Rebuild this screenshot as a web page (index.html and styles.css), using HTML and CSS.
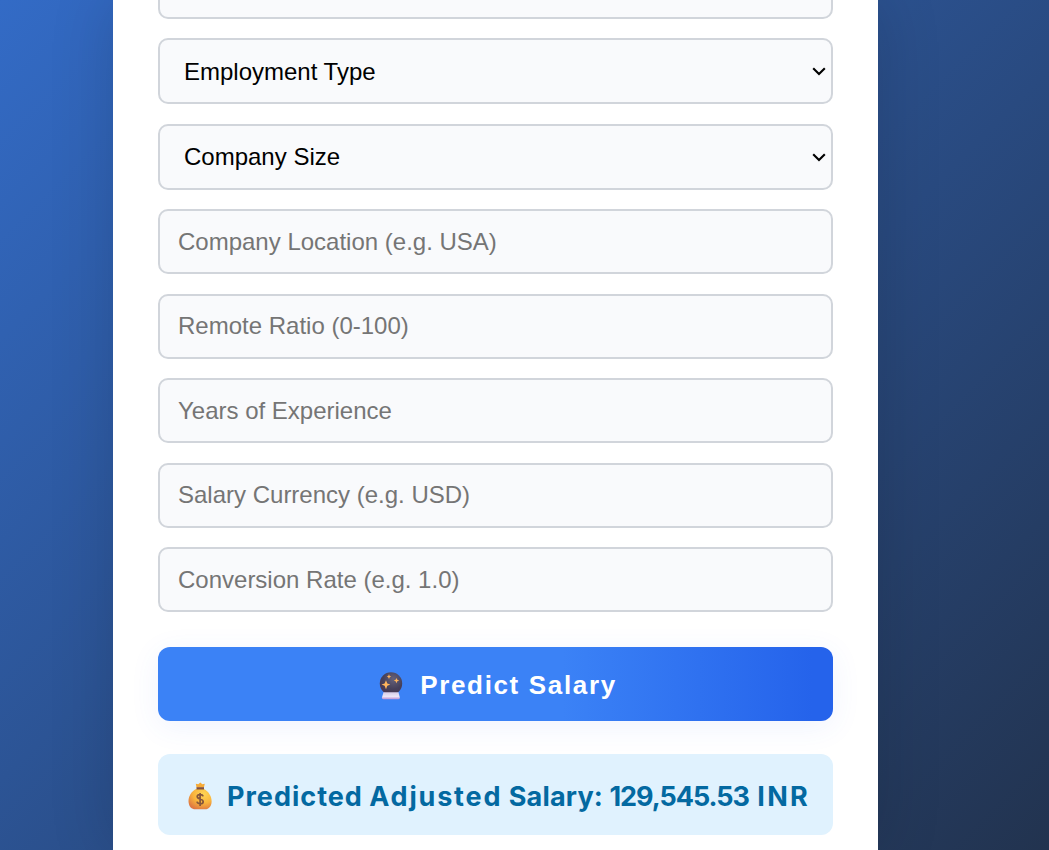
FILE: index.html
```html
<!DOCTYPE html>
<html lang="en">
<head>
<meta charset="utf-8">
<title>Salary Prediction</title>
<link rel="stylesheet" href="styles.css">
</head>
<body>
<main class="card">
  <form class="form">
    <input class="field" type="text" aria-label="Job details">
    <div class="select-wrap">
      <select class="field select" aria-label="Employment Type"><option>Employment Type</option></select>
      <svg class="chevron" viewBox="0 0 14 9" aria-hidden="true"><path d="M1.200 1.200L7 7L12.800 1.200"/></svg>
    </div>
    <div class="select-wrap">
      <select class="field select" aria-label="Company Size"><option>Company Size</option></select>
      <svg class="chevron" viewBox="0 0 14 9" aria-hidden="true"><path d="M1.200 1.200L7 7L12.800 1.200"/></svg>
    </div>
    <input class="field" type="text" placeholder="Company Location (e.g. USA)">
    <input class="field" type="text" placeholder="Remote Ratio (0-100)">
    <input class="field" type="text" placeholder="Years of Experience">
    <input class="field" type="text" placeholder="Salary Currency (e.g. USD)">
    <input class="field" type="text" placeholder="Conversion Rate (e.g. 1.0)">
    <button class="submit" type="button">
      <svg class="ball" viewBox="0 0 24 28" aria-hidden="true">
        <defs>
          <radialGradient id="glass" cx=".6" cy=".3" r=".75"><stop offset="0" stop-color="#65617a"/><stop offset=".6" stop-color="#45405a"/><stop offset="1" stop-color="#4a344f"/></radialGradient>
          <linearGradient id="base" x2="0" y2="1"><stop offset="0" stop-color="#d5cce8"/><stop offset=".6" stop-color="#eee6f7"/><stop offset="1" stop-color="#bd91d5"/></linearGradient>
        </defs>
        <circle cx="12" cy="11.5" r="11.2" fill="url(#glass)"/>
        <path d="M4.500 20.300H19.500L20.900 25.800Q20.900 27.200 19.500 27.200H4.300Q2.800 27.200 2.900 25.800Z" fill="url(#base)"/>
        <path d="M7 8.200L8.300 11.500L11.300 12.500L8.300 13.800L7 17.300L5.600 13.800L2.500 12.500L5.600 11.500ZM10 2.300L10.700 4L12.300 4.600L10.700 5.200L10 7.100L9.200 5.200L7.700 4.600L9.200 4ZM17.500 5.900L18.300 7.700L20.200 8.400L18.300 9.200L17.500 11.200L16.600 9.200L14.800 8.400L16.600 7.700Z" fill="#ffb45c"/>
      </svg>
      <span>Predict Salary</span>
    </button>
  </form>
  <div class="result">
    <svg class="bag" viewBox="0 0 24 28" aria-hidden="true">
      <defs><radialGradient id="gold" cx=".65" cy=".25" r=".8"><stop offset="0" stop-color="#ffd655"/><stop offset=".55" stop-color="#f9b53c"/><stop offset="1" stop-color="#df7842"/></radialGradient></defs>
      <path d="M8 7C3.500 9.500 .5 14 .5 19C.5 25 4 27.300 7 27.300H17C21 27.300 23.600 24 23.600 19.500C23.600 14 20.500 9.500 16 7Z" fill="url(#gold)"/>
      <path d="M8.500 5.500L7.800 1.800L10.300 2.300L12.300 .5L14.300 2.300L16.800 1.800L15.900 5.500Z" fill="#f6ab37"/>
      <path d="M8.500 5.200H16V7.500H8.500Z" fill="#80503f"/>
      <path d="M15 14.300C14.500 11.900 9.200 11.900 9.200 14.600C9.200 17.700 15.200 16.400 15.200 19.700C15.200 22.400 9.500 22.400 9 19.700M12.100 11V24" fill="none" stroke="#85563b" stroke-width="1.700"/>
    </svg>
    <span class="result-text"><span class="label-a">Predicted</span> <span class="label-b">Adjusted</span> <span class="label-c">Salary:</span> <span class="amount">129,545.53</span> <span class="currency">INR</span></span>
  </div>
</main>
</body>
</html>
```
FILE: styles.css
```css
* { box-sizing: border-box; }
body {
  margin: 0;
  height: 850px;
  overflow: hidden;
  background: linear-gradient(135deg, #336bc6, #22334f);
  font-family: "Liberation Sans", Arial, sans-serif;
}
.card {
  display: flow-root;
  width: 765px;
  height: 850px;
  margin-left: 113px;
  padding: 0 45px;
  background: #fff;
  box-shadow: 0 0 60px rgba(0, 0, 0, .15);
}
.form { display: flex; flex-direction: column; gap: 19.5px; margin-top: -46.3px; }
.field {
  display: block;
  flex: none;
  width: 100%;
  height: 65px;
  margin: 0;
  padding: 0 18px;
  border: 2px solid #d1d5db;
  border-radius: 10px;
  background: #f9fafc;
  color: #000;
  font: 24px "Liberation Sans", Arial, sans-serif;
}
.field::placeholder { color: #757575; }
.select-wrap { position: relative; }
.select { height: 66px; padding: 0 0 0 24px; appearance: none; }
.chevron {
  position: absolute;
  right: 7px;
  top: 29px;
  width: 14px;
  height: 9px;
  fill: none;
  stroke: #000;
  stroke-width: 2.1;
  pointer-events: none;
}
.submit {
  display: flex;
  align-items: center;
  justify-content: center;
  gap: 17px;
  height: 74px;
  margin: 15.3px 0 0;
  padding: 3px 0 0 5px;
  border: 0;
  border-radius: 12px;
  background: linear-gradient(to right, #3b82f6 0%, #3b82f6 60%, #2563eb 97%);
  box-shadow: 0 6px 30px rgba(59, 100, 246, .08);
  color: #fff;
  font: bold 26px "Liberation Sans", Arial, sans-serif;
  letter-spacing: 1.65px;
}
.ball, .bag { width: 24px; height: 28px; flex: none; }
.result {
  display: flex;
  align-items: center;
  gap: 15px;
  height: 81px;
  margin-top: 33px;
  padding: 3px 0 0 30px;
  border-radius: 12px;
  background: #e0f2fe;
  color: #0369a1;
  font: bold 27px Inter, sans-serif;
  white-space: nowrap;
}
.label-a { letter-spacing: 1px; }
.label-b { letter-spacing: 1.8px; }
.label-c { letter-spacing: .2px; }
.amount { letter-spacing: -1.05px; margin-right: 2px; }
.currency { letter-spacing: 2.3px; }
```
